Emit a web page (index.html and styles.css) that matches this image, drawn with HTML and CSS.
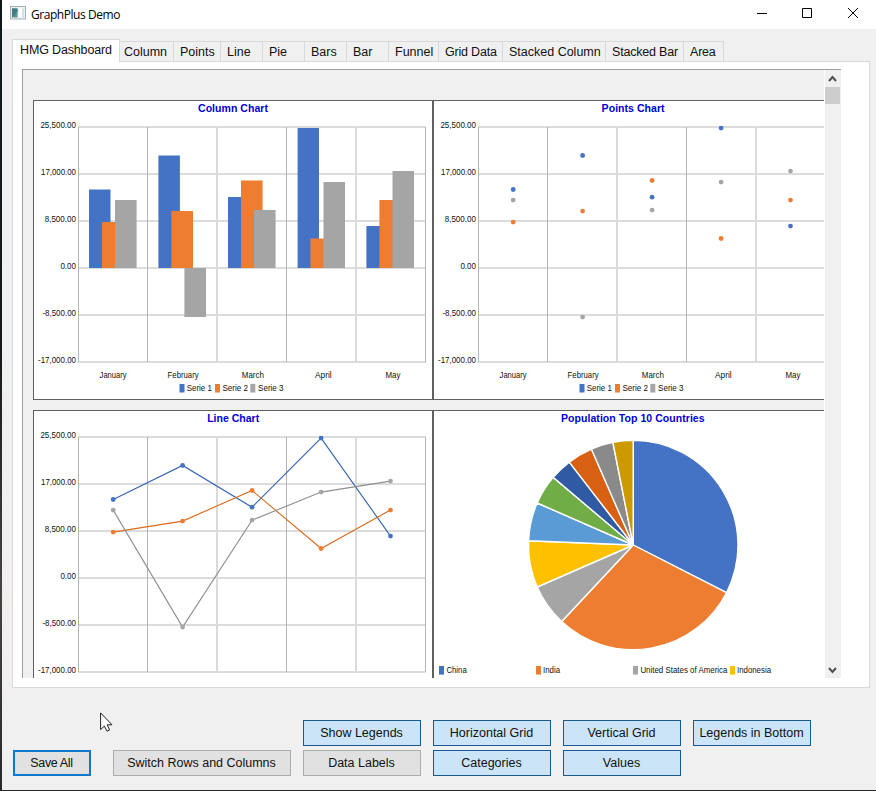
FILE: index.html
```html
<!DOCTYPE html>
<html lang="en">
<head>
<meta charset="utf-8">
<title>GraphPlus Demo</title>
<link rel="stylesheet" href="styles.css">
</head>
<body>
<svg class="defs" width="0" height="0" aria-hidden="true">
  <defs>
    <g id="grid">
      <path class="h" d="M45 27H393M45 74H393M45 121H393M45 168H393M45 215H393M45 262H393"/>
      <path class="v" d="M45.5 27V262M114.5 27V262M253.5 27V262M392.5 27V262"/>
      <path class="v2" d="M184 27V262M323 27V262"/>
    </g>
    <g id="values" class="lbl end">
      <text x="43" y="28" textLength="35.6" lengthAdjust="spacingAndGlyphs">25,500.00</text>
      <text x="43" y="75" textLength="35" lengthAdjust="spacingAndGlyphs">17,000.00</text>
      <text x="43" y="122" textLength="31.3" lengthAdjust="spacingAndGlyphs">8,500.00</text>
      <text x="43" y="169" textLength="15.6" lengthAdjust="spacingAndGlyphs">0.00</text>
      <text x="43" y="216" textLength="33.6" lengthAdjust="spacingAndGlyphs">-8,500.00</text>
      <text x="43" y="263" textLength="38" lengthAdjust="spacingAndGlyphs">-17,000.00</text>
    </g>
    <g id="bottom">
      <g class="lbl">
        <text x="66.6" y="278.3" textLength="27" lengthAdjust="spacingAndGlyphs">January</text>
        <text x="134.6" y="278.3" textLength="31" lengthAdjust="spacingAndGlyphs">February</text>
        <text x="208.8" y="278.3" textLength="22" lengthAdjust="spacingAndGlyphs">March</text>
        <text x="282" y="278.3" textLength="16.6" lengthAdjust="spacingAndGlyphs">April</text>
        <text x="352.4" y="278.3" textLength="15" lengthAdjust="spacingAndGlyphs">May</text>
        <text x="153.8" y="291" textLength="25" lengthAdjust="spacingAndGlyphs">Serie 1</text>
        <text x="189.4" y="291" textLength="25.6" lengthAdjust="spacingAndGlyphs">Serie 2</text>
        <text x="225" y="291" textLength="25.6" lengthAdjust="spacingAndGlyphs">Serie 3</text>
      </g>
      <rect class="c1" x="146.5" y="284" width="5" height="8.5"/>
      <rect class="c2" x="182" y="284" width="5" height="8.5"/>
      <rect class="c3" x="217.3" y="284" width="5" height="8.5"/>
    </g>
    <g id="dots">
      <g class="c1"><circle cx="80.2" cy="89.5" r="2.4"/><circle cx="149.6" cy="55.5" r="2.4"/><circle cx="219.1" cy="97.2" r="2.4"/><circle cx="288.1" cy="28.1" r="2.4"/><circle cx="357.5" cy="126.1" r="2.4"/></g>
      <g class="c2"><circle cx="80.2" cy="122.1" r="2.4"/><circle cx="149.6" cy="111.1" r="2.4"/><circle cx="219.1" cy="80.5" r="2.4"/><circle cx="288.1" cy="138.5" r="2.4"/><circle cx="357.5" cy="100.1" r="2.4"/></g>
      <g class="c3"><circle cx="80.2" cy="100.1" r="2.4"/><circle cx="149.6" cy="217.1" r="2.4"/><circle cx="219.1" cy="110.1" r="2.4"/><circle cx="288.1" cy="82.1" r="2.4"/><circle cx="357.5" cy="71.1" r="2.4"/></g>
    </g>
  </defs>
</svg>

<div class="window">
  <header class="titlebar">
    <svg class="app-icon" width="16" height="14" viewBox="0 0 16 14">
      <rect x=".5" y=".5" width="15" height="12.5" fill="#eef1f4" stroke="#a3adb7"/>
      <rect x="2" y="2.5" width="5.5" height="9" fill="#56958c"/>
      <path d="M2 2.5h5.5v3l-5.5 6z" fill="#447a83"/>
      <rect x="9" y="2.5" width="2.5" height="9" fill="#fff"/>
      <rect x="12.3" y="2.5" width="1.7" height="9" fill="#d4dde3"/>
    </svg>
    <span class="title">GraphPlus Demo</span>
    <svg class="controls" width="105" height="14" viewBox="0 0 105 14">
      <path d="M0 6.5h10M45.5 1.5h9v9h-9zM91 1l10 10M101 1L91 11" fill="none" stroke="#000"/>
    </svg>
  </header>

  <nav class="tabs">
    <div class="tab active">HMG Dashboard</div>
    <div class="tab">Column</div>
    <div class="tab">Points</div>
    <div class="tab">Line</div>
    <div class="tab">Pie</div>
    <div class="tab">Bars</div>
    <div class="tab">Bar</div>
    <div class="tab">Funnel</div>
    <div class="tab tight">Grid Data</div>
    <div class="tab">Stacked Column</div>
    <div class="tab tight">Stacked Bar</div>
    <div class="tab tight">Area</div>
  </nav>

  <main class="page">
    <div class="scroller">
      <div class="viewport">
        <svg class="chart" viewBox="0 0 400 300">
          <text class="heading" x="165" y="12" textLength="70">Column Chart</text>
          <use href="#grid"/><use href="#values"/><use href="#bottom"/>
          <g class="c1"><path d="M56 89.4h21.5V168H56zM125.4 55.4h21.5V168h-21.5zM195 97h21.5v71H195zM264.6 28H286v140h-21.4zM333.4 126h21.5v42h-21.5z"/></g>
          <g class="c2"><path d="M69 122h21.5v46H69zM138.4 111H160v57h-21.6zM208 80.4h21.6V168H208zM277.4 138.4h21.5V168h-21.5zM346.4 100H368v68h-21.6z"/></g>
          <g class="c3"><path d="M82 100h21.6v68H82zM151.4 168H173v49h-21.6zM221 110h21.6v58H221zM290.5 82H312v86h-21.5zM359.5 71H381v97h-21.5z"/></g>
          <rect class="frame" x=".5" y=".5" width="399" height="299"/>
        </svg>
        <svg class="chart" viewBox="0 0 400 300">
          <text class="heading" x="168.6" y="12" textLength="63">Points Chart</text>
          <use href="#grid"/><use href="#values"/><use href="#bottom"/><use href="#dots"/>
          <rect class="frame" x=".5" y=".5" width="399" height="299"/>
        </svg>
        <svg class="chart" viewBox="0 0 400 300">
          <text class="heading" x="174.2" y="12" textLength="52">Line Chart</text>
          <use href="#grid"/><use href="#values"/><use href="#bottom"/>
          <g class="lines">
            <path stroke="#2f61b5" d="M80.2 89.5L149.6 55.5 219.1 97.2 288.1 28.1 357.5 126.1"/>
            <path stroke="#dc6a1e" d="M80.2 122.1L149.6 111.1 219.1 80.5 288.1 138.5 357.5 100.1"/>
            <path stroke="#8f8f8f" d="M80.2 100.1L149.6 217.1 219.1 110.1 288.1 82.1 357.5 71.1"/>
          </g>
          <use href="#dots"/>
          <rect class="frame" x=".5" y=".5" width="399" height="299"/>
        </svg>
        <svg class="chart" viewBox="0 0 400 300">
          <text class="heading" x="128" y="12" textLength="143.6">Population Top 10 Countries</text>
          <g class="pie">
            <path fill="#4472c4" d="M200.2 135V30.3A104.7 104.7 0 0 1 293.5 182.7z"/>
            <path fill="#ed7d31" d="M200.2 135L293.5 182.7A104.7 104.7 0 0 1 128.7 211.5z"/>
            <path fill="#a5a5a5" d="M200.2 135L128.7 211.5A104.7 104.7 0 0 1 104.2 177z"/>
            <path fill="#ffc000" d="M200.2 135L104.2 177A104.7 104.7 0 0 1 95.6 130.7z"/>
            <path fill="#5b9bd5" d="M200.2 135L95.6 130.7A104.7 104.7 0 0 1 104.2 93z"/>
            <path fill="#70ad47" d="M200.2 135L104.2 93A104.7 104.7 0 0 1 120.2 67.4z"/>
            <path fill="#305aa4" d="M200.2 135L120.2 67.4A104.7 104.7 0 0 1 136.3 52.1z"/>
            <path fill="#d86012" d="M200.2 135L136.3 52.1A104.7 104.7 0 0 1 158.4 39z"/>
            <path fill="#8a8a8a" d="M200.2 135L158.4 39A104.7 104.7 0 0 1 179.9 32.3z"/>
            <path fill="#cc9a00" d="M200.2 135L179.9 32.3A104.7 104.7 0 0 1 200.2 30.3z"/>
          </g>
          <rect class="c1" x="6" y="256" width="5" height="8.6"/>
          <rect class="c2" x="103" y="256" width="5" height="8.6"/>
          <rect class="c3" x="200" y="256" width="5" height="8.6"/>
          <rect fill="#ffc000" x="297" y="256" width="5" height="8.6"/>
          <g class="lbl">
            <text x="13.4" y="263" textLength="20.4" lengthAdjust="spacingAndGlyphs">China</text>
            <text x="110" y="263" textLength="17" lengthAdjust="spacingAndGlyphs">India</text>
            <text x="207.4" y="263" textLength="87" lengthAdjust="spacingAndGlyphs">United States of America</text>
            <text x="304" y="263" textLength="34" lengthAdjust="spacingAndGlyphs">Indonesia</text>
          </g>
          <rect class="frame" x=".5" y=".5" width="399" height="299"/>
        </svg>
      </div>
      <div class="scrollbar">
        <svg width="15" height="16" viewBox="0 0 15 16"><path d="M4 11l3.5-4L11 11" fill="none" stroke="#505050" stroke-width="2"/></svg>
        <div class="thumb"></div>
        <svg class="down" width="15" height="16" viewBox="0 0 15 16"><path d="M4 6l3.5 4L11 6" fill="none" stroke="#505050" stroke-width="2"/></svg>
      </div>
    </div>
  </main>

  <footer class="actions">
    <button class="btn on r1 k3">Show Legends</button>
    <button class="btn on r1 k4">Horizontal Grid</button>
    <button class="btn on r1 k5">Vertical Grid</button>
    <button class="btn on r1 k6">Legends in Bottom</button>
    <button class="btn focus k1">Save All</button>
    <button class="btn k2">Switch Rows and Columns</button>
    <button class="btn k3">Data Labels</button>
    <button class="btn on k4">Categories</button>
    <button class="btn on k5">Values</button>
  </footer>

  <svg class="pointer" width="13" height="20" viewBox="0 0 13 20">
    <path d="M.6 .9V17.6L4.4 14 7 19.2 9.6 18 7.2 12.8H12z" fill="#fff" stroke="#222" stroke-width="1"/>
  </svg>
</div>
</body>
</html>
```
FILE: styles.css
```css
* { box-sizing: border-box; }

body {
  margin: 0;
  width: 876px;
  height: 791px;
  overflow: hidden;
  padding: 0 0 1px 2px;
  background: linear-gradient(#10181c, #15191b 45%, #484442 75%, #2a2828);
  font-family: "Liberation Sans", Arial, sans-serif;
  font-size: 12.5px;
  color: #111;
}

.defs { position: absolute; }

.window {
  position: relative;
  height: 790px;
  background: #f0f0f0;
  display: flex;
  flex-direction: column;
}

.titlebar {
  height: 29px;
  flex: none;
  background: #fff;
  display: flex;
  align-items: flex-start;
  padding: 6px 14px 0 8px;
}
.app-icon { flex: none; }
.title {
  margin: 0 0 0 5px;
  font: 12px/17px "Open Sans", "Noto Sans", sans-serif;
  letter-spacing: -0.45px;
  color: #000;
}
.controls { margin: 1px 0 0 auto; }

.tabs {
  height: 32px;
  flex: none;
  padding: 10px 0 0 10px;
  display: grid;
  grid-template-columns: 108px 54px 47px 42px 42px 42px 42px 50px 64px 103px 78px 40px;
  align-items: end;
}
.tab {
  height: 20px;
  padding-left: 6px;
  line-height: 20px;
  border: 1px solid #d9d9d9;
  border-width: 1px 1px 0 0;
  white-space: nowrap;
}
.tab:nth-child(2) { padding-left: 4px; }
.tab.tight { letter-spacing: -0.2px; }
.tab.active {
  height: 23px;
  margin-bottom: -1px;
  padding-left: 7px;
  border-left-width: 1px;
  background: #fff;
  line-height: 21px;
  letter-spacing: -0.15px;
  z-index: 1;
}

.page {
  height: 627px;
  flex: none;
  margin: 0 6px 0 10px;
  background: #fff;
  border: 1px solid #d9d9d9;
  padding: 7px 0 0 9px;
}
.scroller {
  width: 819px;
  height: 609px;
  display: flex;
  border: 1px solid #a0a0a0;
  border-width: 1px 0 0 1px;
  background: #f0f0f0;
}
.viewport {
  width: 801px;
  height: 608px;
  overflow: hidden;
  padding: 30px 0 0 10px;
  display: grid;
  grid-template-columns: 400px 400px;
  grid-template-rows: 300px 300px;
  row-gap: 10px;
}
.chart {
  width: 400px;
  height: 300px;
  background: #fff;
}

.scrollbar {
  width: 17px;
  display: flex;
  flex-direction: column;
  border-left: 1px solid #fff;
}
.scrollbar svg { display: block; flex: none; }
.thumb { width: 15px; height: 17px; background: #cdcdcd; margin-top: 1px; }
.down { margin-top: auto; }

.frame { fill: none; stroke: #606060; }
.h { stroke: #dcdcdc; stroke-width: 2; }
.v { stroke: #b4b4b4; }
.v2 { stroke: #dadada; stroke-width: 2; }
.c1 { fill: #4472c4; }
.c2 { fill: #ed7d31; }
.c3 { fill: #a5a5a5; }
.lines path { fill: none; stroke-width: 1.1; }
.pie path { stroke: #fff; stroke-width: 1.4; stroke-linejoin: round; }
.lbl { font-size: 8.6px; fill: #111; }
.end { text-anchor: end; }
.heading { font-size: 10.5px; font-weight: bold; fill: #0000d8; }

.actions {
  display: grid;
  grid-template-columns: 78px 188px 118px 118px 118px 118px;
  grid-template-rows: 26px 26px;
  column-gap: 12px;
  row-gap: 4px;
  padding: 32px 0 0 11px;
}
.btn {
  font: inherit;
  color: #111;
  padding: 0 1px 0 0;
  border: 1px solid #adadad;
  background: #e1e1e1;
  grid-row: 2;
  white-space: nowrap;
}
.btn.r1 { grid-row: 1; }
.k1 { grid-column: 1; }
.k2 { grid-column: 2; margin-left: 10px; width: 178px; }
.k3 { grid-column: 3; }
.k4 { grid-column: 4; }
.k5 { grid-column: 5; }
.k6 { grid-column: 6; }
.btn.on { background: #cce4f7; border-color: #1a5a94; }
.btn.focus { border: 2px solid #0f78cc; letter-spacing: -0.35px; }

.pointer {
  position: absolute;
  left: 98px;
  top: 712px;
}
```
